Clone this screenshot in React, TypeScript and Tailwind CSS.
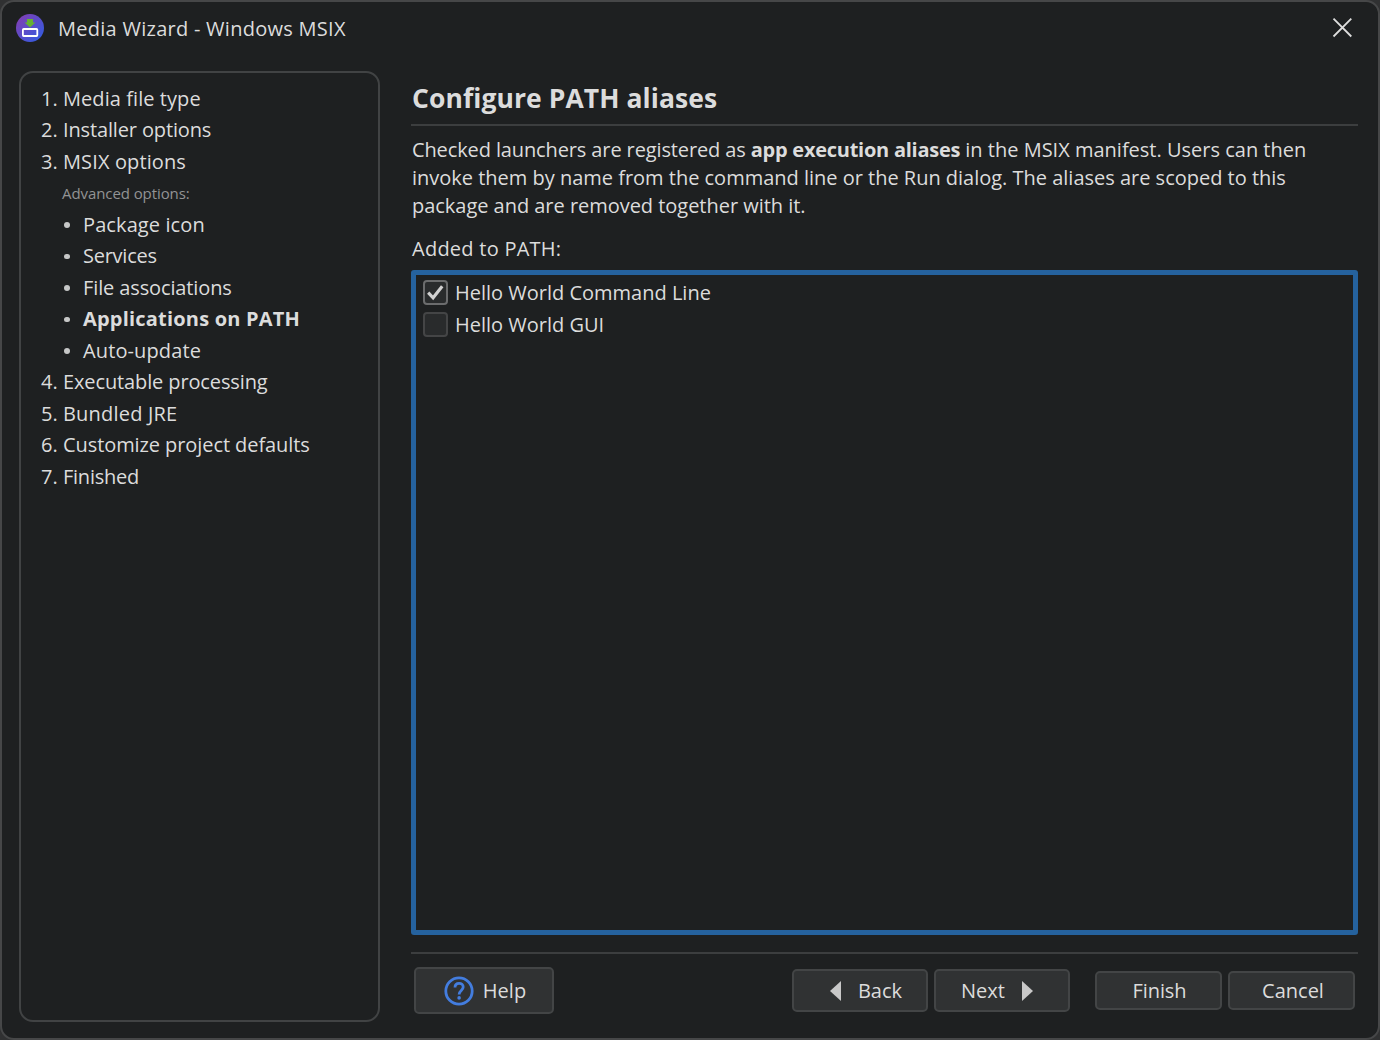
import type { ReactNode } from 'react';
import { clsx } from 'clsx';

interface Step {
  marker?: string;
  label: string;
  kind: 'step' | 'heading' | 'sub';
  tracking?: string;
  active?: boolean;
}

const steps: Step[] = [
  { marker: '1.', label: 'Media file type', kind: 'step', tracking: 'tracking-[0.07px]' },
  { marker: '2.', label: 'Installer options', kind: 'step', tracking: 'tracking-[-0.14px]' },
  { marker: '3.', label: 'MSIX options', kind: 'step', tracking: 'tracking-[0.12px]' },
  { label: 'Advanced options:', kind: 'heading' },
  { label: 'Package icon', kind: 'sub', tracking: 'tracking-[0.1px]' },
  { label: 'Services', kind: 'sub', tracking: 'tracking-[-0.25px]' },
  { label: 'File associations', kind: 'sub', tracking: 'tracking-[-0.12px]' },
  { label: 'Applications on PATH', kind: 'sub', tracking: 'tracking-[0.2px]', active: true },
  { label: 'Auto-update', kind: 'sub', tracking: 'tracking-[0.12px]' },
  { marker: '4.', label: 'Executable processing', kind: 'step', tracking: 'tracking-[-0.12px]' },
  { marker: '5.', label: 'Bundled JRE', kind: 'step', tracking: 'tracking-[0.2px]' },
  { marker: '6.', label: 'Customize project defaults', kind: 'step', tracking: 'tracking-[-0.08px]' },
  { marker: '7.', label: 'Finished', kind: 'step', tracking: 'tracking-[-0.25px]' },
];

const launchers = [
  { name: 'Hello World Command Line', checked: true },
  { name: 'Hello World GUI', checked: false },
];

function AppIcon() {
  return (
    <svg width="28" height="28" viewBox="0 0 28 28" aria-hidden="true">
      <defs>
        <linearGradient id="disc" x1="0" y1="0" x2="1" y2="1">
          <stop offset="0.1" stopColor="#7f3fb4" />
          <stop offset="0.9" stopColor="#345be0" />
        </linearGradient>
      </defs>
      <circle cx="14" cy="14" r="14" fill="url(#disc)" />
      <path d="M11 5h6v3.6h2.4L14 13.6 8.6 8.6H11z" fill="#66b132" />
      <rect x="6.9" y="15" width="14.4" height="7" rx="0.8" fill="none" stroke="#fff" strokeWidth="1.8" />
    </svg>
  );
}

function Checkbox({ checked }: { checked: boolean }) {
  return (
    <span
      role="checkbox"
      aria-checked={checked}
      className={clsx(
        'flex size-[25px] shrink-0 items-center justify-center rounded-[4px] border-2 bg-[#292b2c]',
        checked ? 'border-[#6b6c6d]' : 'border-[#444546]',
      )}
    >
      {checked && (
        <svg width="21" height="21" viewBox="0 0 21 21" fill="none" aria-hidden="true" className="shrink-0">
          <path d="M3.2 10.6l4.9 5.2L17.2 4.2" stroke="#d0d0d0" strokeWidth="3.1" />
        </svg>
      )}
    </span>
  );
}

function Button({ className, children }: { className?: string; children: ReactNode }) {
  return (
    <button
      className={clsx(
        'flex items-center justify-center rounded-[5px] border-2 border-[#434546] bg-[#303233]',
        className,
      )}
    >
      {children}
    </button>
  );
}

function StepRow({ step }: { step: Step }) {
  if (step.kind === 'heading') {
    return (
      <li className="flex h-[31.5px] items-center pl-[21px] text-[15px] tracking-[-0.08px] text-[#929394]">
        {step.label}
      </li>
    );
  }
  return (
    <li className={clsx('flex h-[31.5px] items-center', step.kind === 'sub' && 'pl-[21px]')}>
      {step.kind === 'sub' ? (
        <span className="mr-[13.5px] ml-[2px] size-[5.5px] shrink-0 rounded-full bg-[#c6c7c7]" />
      ) : (
        <span className="w-[22px] shrink-0">{step.marker}</span>
      )}
      <span className={clsx(step.tracking, step.active && 'font-bold')}>{step.label}</span>
    </li>
  );
}

export default function App() {
  return (
    <div className="h-[1040px] w-[1380px] bg-[#303132] font-['Open_Sans','Noto_Sans',sans-serif] text-[20px] whitespace-nowrap text-[#dcdcdc]">
      <div className="flex h-full w-full flex-col rounded-[14px] border-2 border-[#464748] bg-[#1e2021]">
        {/* Title bar */}
        <header className="flex h-[52px] shrink-0 items-center justify-between pr-[26px] pl-[14px]">
          <div className="flex items-center gap-[14px]">
            <AppIcon />
            <span className="pt-[2px] tracking-[0.27px]">Media Wizard - Windows MSIX</span>
          </div>
          <svg width="20" height="20" viewBox="0 0 20 20" stroke="#dedede" strokeWidth="1.8" aria-label="Close">
            <path d="M1.5 .7l17.8 17.8M19.3 .7L1.5 18.5" />
          </svg>
        </header>

        <div className="flex min-h-0 flex-1 pt-[17px] pr-[20px] pb-[16px] pl-[17px]">
          <nav className="w-[361px] shrink-0 rounded-[14px] border-2 border-[#414344] pt-[10px] pl-[20px]">
            <ul>
              {steps.map((step) => (
                <StepRow key={step.label} step={step} />
              ))}
            </ul>
          </nav>

          <main className="ml-[31px] flex min-w-0 flex-1 flex-col">
            <h1 className="flex h-[53px] items-center pt-[3px] pl-px text-[26.5px] font-bold tracking-[0.07px]">
              Configure PATH aliases
            </h1>
            <div className="h-[2px] shrink-0 bg-[#3c3e3f]" />
            <p className="mt-[10px] pl-px leading-[28px]">
              <span className="tracking-[-0.12px]">Checked launchers are registered as </span>
              <b className="tracking-[-0.26px]">app execution aliases</b> in the MSIX manifest. Users can then
              <br />
              <span className="tracking-[-0.01px]">
                invoke them by name from the command line or the Run dialog. The aliases are scoped to this
              </span>
              <br />
              <span className="tracking-[-0.03px]">package and are removed together with it.</span>
            </p>
            <div className="mt-[15px] pl-px leading-[28px] tracking-[0.25px]">Added to PATH:</div>

            <ul className="mt-[7px] h-[665px] shrink-0 rounded-[3px] border-[5px] border-[#25629e] pt-px pl-[7px]">
              {launchers.map((launcher) => (
                <li key={launcher.name} className="flex h-8 items-center gap-[7px]">
                  <Checkbox checked={launcher.checked} />
                  <span className="pt-[2px]">{launcher.name}</span>
                </li>
              ))}
            </ul>

            <div className="mt-[17px] h-[2px] shrink-0 bg-[#3c3e3f]" />

            {/* Wizard buttons */}
            <footer className="mt-[13px] flex h-[47px] shrink-0 items-center pr-[3px] pl-[3px]">
              <Button className="h-[47px] w-[140px] gap-[9px] pl-[2px]">
                <svg width="30" height="30" viewBox="0 0 30 30" fill="none" stroke="#437ddf" strokeWidth="2.8" aria-hidden="true">
                  <circle cx="15" cy="15" r="13.2" />
                  <path d="M11 11.4c0-2.6 1.8-4.1 4.1-4.1s4.1 1.5 4.1 3.8c0 3.2-4.1 3.6-4.1 7.4" />
                  <circle cx="15.1" cy="21.9" r="1.8" fill="#437ddf" stroke="none" />
                </svg>
                <span>Help</span>
              </Button>
              <div className="flex-1" />
              <Button className="h-[43px] w-[136px] gap-[17px] pl-[12px]">
                <svg width="11" height="20" viewBox="0 0 11 20" fill="#c8c8c8" aria-hidden="true">
                  <path d="M11 0v20L0 10z" />
                </svg>
                <span>Back</span>
              </Button>
              <Button className="ml-[6px] h-[43px] w-[136px] gap-[17px] pr-[10px]">
                <span>Next</span>
                <svg width="11" height="20" viewBox="0 0 11 20" fill="#c8c8c8" aria-hidden="true">
                  <path d="M0 0v20l11-10z" />
                </svg>
              </Button>
              <Button className="ml-[25px] h-[39px] w-[127px] pl-[2px] tracking-[-0.1px]">Finish</Button>
              <Button className="ml-[6px] h-[39px] w-[127px] pl-[3px]">Cancel</Button>
            </footer>
          </main>
        </div>
      </div>
    </div>
  );
}
